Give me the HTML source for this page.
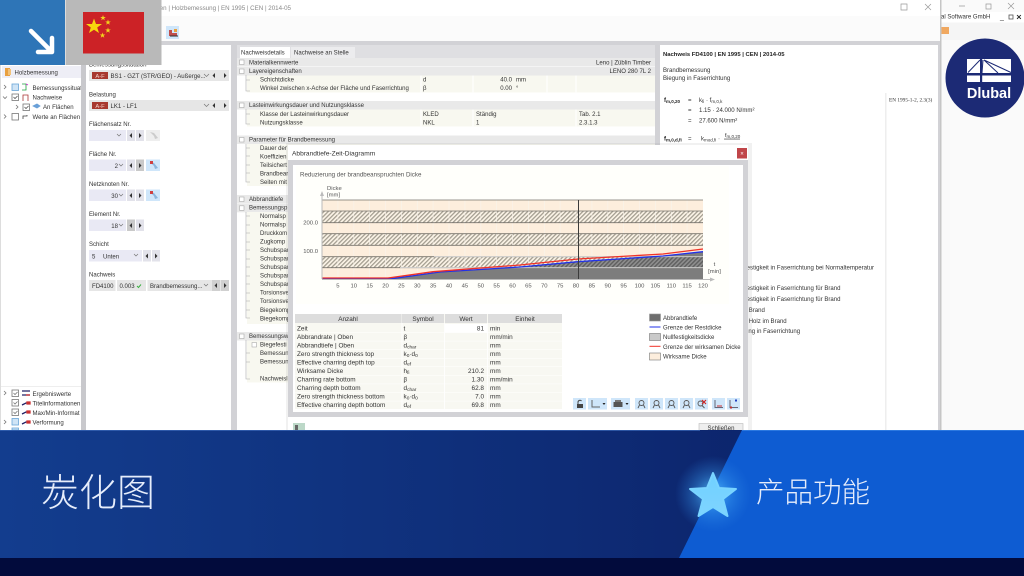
<!DOCTYPE html>
<html lang="de"><head><meta charset="utf-8"><title>炭化图</title>
<style>
html,body{margin:0;padding:0;width:1024px;height:576px;overflow:hidden;background:#fff}
svg{display:block}
text{font-family:"Liberation Sans","Noto Sans CJK SC",sans-serif;font-size:6.05px;fill:#333}
.tb text{font-size:6.4px}
.g{fill:#666}.b{font-weight:bold;fill:#222}.e{text-anchor:end}.m{text-anchor:middle}
.t{font-size:5.9px;fill:#555}
.cn{font-family:"Noto Sans CJK SC","WenQuanYi Zen Hei",sans-serif;fill:#e6edfb;font-weight:300}
.sec{fill:#e9e9e9}.row{fill:#f8f8f0}.c{fill:#e9e9f4}.a{fill:#e2e2ea}.p{fill:#cfe6fa}
.ln{stroke:#aaa;stroke-width:.6;fill:none}
</style></head><body>
<svg width="1024" height="576" viewBox="0 0 1024 576" xmlns="http://www.w3.org/2000/svg">
<defs>
<pattern id="h" width="3" height="3" patternUnits="userSpaceOnUse" patternTransform="rotate(-45)"><rect width="3" height="3" fill="#fdf5e8"/><rect width="3" height="1.3" fill="#a39d90"/></pattern>
<pattern id="hd" width="3" height="3" patternUnits="userSpaceOnUse" patternTransform="rotate(-45)"><rect width="3" height="3" fill="#8e8e8e"/><rect width="3" height="1.4" fill="#5f5f5f"/></pattern>
<clipPath id="ch"><polygon points="322,279 390,278 440,272 520,267 578,261.7 663,256 703,251.7 703,279"/></clipPath>
<linearGradient id="bg" x1="0" y1="0" x2="1" y2="0"><stop offset="0" stop-color="#133d8e"/><stop offset=".55" stop-color="#0e2c76"/><stop offset="1" stop-color="#0a1b60"/></linearGradient>
<radialGradient id="glow"><stop offset="0" stop-color="#58c4ff" stop-opacity=".9"/><stop offset=".5" stop-color="#3a9cf0" stop-opacity=".4"/><stop offset="1" stop-color="#2a80e0" stop-opacity="0"/></radialGradient>
<linearGradient id="st" x1="0" y1="0" x2="0" y2="1"><stop offset="0" stop-color="#6fd0ff"/><stop offset="1" stop-color="#7fd4ff"/></linearGradient>
<filter id="bl" x="-2%" y="-2%" width="104%" height="104%"><feGaussianBlur stdDeviation=".32"/></filter>
</defs>
<g filter="url(#bl)">
<rect width="1024" height="576" fill="#fff"/>
<!-- back window -->
<rect x="941" y="0" width="83" height="430" fill="#fafafa"/>
<rect x="941" y="12" width="83" height="10" fill="#fff"/>
<rect x="941" y="23" width="83" height="17" fill="#f5f5f5"/>
<rect x="941" y="27" width="8" height="7" fill="#f0a860"/>
<text x="941" y="18.500">al Software GmbH</text>
<text x="1000" y="19" style="font-size:7px">_</text><rect x="1009" y="15" width="4" height="4" fill="none" stroke="#555" stroke-width=".8"/><text x="1016" y="19.500" class="b" style="font-size:7px">✕</text>
<path d="M959 6h6M986 4h5v5h-5zM1008 3l6 6m0-6l-6 6" stroke="#999" stroke-width=".7" fill="none"/>
<!-- front window -->
<rect x="0" y="0" width="941" height="430" fill="#fff"/>
<rect x="940" y="0" width="1.500" height="430" fill="#c6c6c6"/>
<text x="291" y="10" class="e" style="font-size:6.200px;fill:#888">Nachweisen | Holzbemessung | EN 1995 | CEN | 2014-05</text>
<path d="M901 4h6v6h-6zM925 4l6 6m0-6l-6 6" stroke="#999" stroke-width=".7" fill="none"/>
<rect x="0" y="16" width="940" height="25" fill="#fbfbfb"/>
<rect x="166" y="26" width="13" height="13" fill="#cfe6fa"/><path d="M169 30v6h8v-3h-5v-3z" fill="#c0504d"/><path d="M170 36h8" stroke="#333"/><rect x="174" y="29" width="3" height="3" fill="#e8a040"/>
<rect x="81" y="41" width="859" height="389" fill="#d2d2d6"/>
<!-- tree -->
<rect x="0" y="65" width="81" height="365" fill="#fff"/>
<rect x="0" y="65" width="1" height="365" fill="#ddd"/>
<rect x="2" y="66" width="79" height="12" fill="#eeeef6"/>
<rect x="5" y="68" width="5" height="8" fill="#e8a040"/><rect x="8" y="69" width="3" height="6" fill="#f2c27a"/>
<text x="14.500" y="74.500">Holzbemessung</text>
<g fill="none" stroke-width=".8">
<path d="M4 85l2 2-2 2M3 96.500l2 2 2-2M16 105l2 2-2 2M4 114.500l2 2-2 2" stroke="#777"/>
<rect x="12" y="84" width="6.500" height="6.500" stroke="#6aa6d8" fill="#cfe4f6"/>
<rect x="12" y="94" width="6.500" height="6.500" stroke="#777"/><path d="M13.500 97l1.500 1.500 2.500-2.500" stroke="#555"/>
<rect x="23" y="104" width="6.500" height="6.500" stroke="#777"/><path d="M24.500 107l1.500 1.500 2.500-2.500" stroke="#555"/>
<rect x="12" y="113.500" width="6.500" height="6.500" stroke="#777"/>
<path d="M22 84h4v6h-4" stroke="#20a040"/><path d="M26 84l2 1" stroke="#d020d0"/>
<path d="M23 101v-6h5v6" stroke="#a33"/>
<path d="M33 106l4-2 3 2-3 2z" fill="#6aa0d8" stroke="#6aa0d8"/>
<path d="M23 119v-3h4v-1" stroke="#444"/>
</g>
<text x="32.500" y="90">Bemessungssituat</text><text x="32.500" y="99.500">Nachweise</text><text x="43" y="109">An Flächen</text><text x="32.500" y="119">Werte an Flächen</text>
<rect x="1" y="386" width="80" height="1" fill="#eee"/>
<g fill="none" stroke-width=".8" stroke="#777">
<path d="M4 391l2 2-2 2M4 420l2 2-2 2"/>
<rect x="12" y="390" width="6.500" height="6.500"/><path d="M13.500 393l1.500 1.500 2.500-2.500"/>
<rect x="12" y="399.500" width="6.500" height="6.500"/><path d="M13.500 402.500l1.500 1.500 2.500-2.500"/>
<rect x="12" y="409" width="6.500" height="6.500"/><path d="M13.500 412l1.500 1.500 2.500-2.500"/>
<rect x="12" y="418.500" width="6.500" height="6.500" stroke="#6aa6d8" fill="#cfe4f6"/>
<rect x="12" y="428" width="6.500" height="2" stroke="#6aa6d8" fill="#cfe4f6"/>
</g>
<g stroke-width="1.300" fill="none">
<path d="M22 391h8M22 395h8" stroke="#226"/><path d="M26 395h4" stroke="#c33"/>
<path d="M22 405l4-2h4" stroke="#226"/><path d="M27 402h3v2h-3z" fill="#c33" stroke="#c33"/>
<path d="M22 414l4-2h4" stroke="#226"/><path d="M27 411h3v2h-3z" fill="#c33" stroke="#c33"/>
<path d="M22 424l4-2h4" stroke="#226"/><path d="M27 421h3v2h-3z" fill="#c33" stroke="#c33"/>
</g>
<text x="32.500" y="396">Ergebniswerte</text><text x="32.500" y="405.500">Titelinformationen</text><text x="32.500" y="415">Max/Min-Informat</text><text x="32.500" y="424.500">Verformung</text>
<rect x="81" y="65" width="5" height="365" fill="#c8c8cc"/>
<!-- settings -->
<rect x="86" y="45" width="145" height="385" fill="#fff"/>
<text x="89" y="66.500">Bemessungssituation</text>
<rect x="89" y="70" width="140" height="11" fill="#e6e6e6"/><rect x="92" y="72" width="16" height="7" fill="#a8392f"/><text x="100" y="77.800" class="m" style="fill:#f4d0c8;font-size:5.800px">A-F</text>
<text x="110.500" y="78">BS1 - GZT (STR/GEO) - Außerge...</text>
<rect x="89" y="100" width="140" height="11" fill="#e6e6e6"/><rect x="92" y="102" width="16" height="7" fill="#a8392f"/><text x="100" y="107.800" class="m" style="fill:#f4d0c8;font-size:5.800px">A-F</text>
<text x="110.500" y="108">LK1 - LF1</text>
<text x="89" y="96.500">Belastung</text>
<text x="89" y="126">Flächensatz Nr.</text>
<rect x="89" y="130" width="37" height="11" class="c"/><rect x="127" y="130" width="8" height="11" class="a"/><rect x="136" y="130" width="8" height="11" class="a"/><rect x="146" y="130" width="14" height="11" fill="#eee"/>
<text x="89" y="156">Fläche Nr.</text>
<rect x="89" y="159.500" width="37" height="11.500" class="c"/><rect x="127" y="159.500" width="8" height="11.500" class="a"/><rect x="136" y="159.500" width="8" height="11.500" fill="#c9c9c9"/><rect x="146" y="159.500" width="14" height="11.500" class="p"/>
<text x="118" y="168" class="e">2</text>
<text x="89" y="186">Netzknoten Nr.</text>
<rect x="89" y="189.500" width="37" height="11.500" class="c"/><rect x="127" y="189.500" width="8" height="11.500" class="a"/><rect x="136" y="189.500" width="8" height="11.500" class="a"/><rect x="146" y="189.500" width="14" height="11.500" class="p"/>
<text x="118" y="198" class="e">30</text>
<text x="89" y="216">Element Nr.</text>
<rect x="89" y="219.500" width="37" height="11.500" class="c"/><rect x="127" y="219.500" width="8" height="11.500" fill="#c9c9c9"/><rect x="136" y="219.500" width="8" height="11.500" class="a"/>
<text x="118" y="228" class="e">18</text>
<text x="89" y="246">Schicht</text>
<rect x="89" y="250" width="53" height="11.500" class="c"/><rect x="143" y="250" width="8" height="11.500" class="a"/><rect x="152" y="250" width="8" height="11.500" class="a"/>
<text x="92" y="258.500">5</text><text x="103" y="258.500">Unten</text>
<text x="89" y="276.500">Nachweis</text>
<rect x="89" y="280" width="140" height="11" fill="#e6e6e6"/><rect x="115.500" y="280" width="1.500" height="11" fill="#fff"/><rect x="146" y="280" width="1.500" height="11" fill="#fff"/>
<rect x="212" y="280" width="8" height="11" fill="#d0d0d0"/><rect x="221" y="280" width="8" height="11" fill="#d0d0d0"/>
<text x="92" y="288">FD4100</text><text x="119.500" y="288">0.003</text><path d="M137 286l1.500 1.500 2.500-3" stroke="#3cb043" fill="none"/><text x="150" y="288">Brandbemessung...</text>
<!-- small arrows and carets -->
<g fill="#333">
<path d="M215 73l-2.500 2.500 2.500 2.500zM224 73l2.500 2.500-2.500 2.500zM215 103l-2.500 2.500 2.500 2.500zM224 103l2.500 2.500-2.500 2.500z"/>
<path d="M132 133l-2.500 2.500 2.500 2.500zM139 133l2.500 2.500-2.500 2.500zM132 163l-2.500 2.500 2.500 2.500zM139 163l2.500 2.500-2.500 2.500zM132 193l-2.500 2.500 2.500 2.500zM139 193l2.500 2.500-2.500 2.500zM132 223l-2.500 2.500 2.500 2.500zM139 223l2.500 2.500-2.500 2.500z"/>
<path d="M148 253.500l-2.500 2.500 2.500 2.500zM155 253.500l2.500 2.500-2.500 2.500zM217 283l-2.500 2.500 2.500 2.500zM224 283l2.500 2.500-2.500 2.500z"/>
</g>
<path d="M204 74l2.500 2.500 2.500-2.500M204 104l2.500 2.500 2.500-2.500M117 134l2 2 2-2M119 164l2 2 2-2M119 194l2 2 2-2M119 224l2 2 2-2M134 254l2 2 2-2M204 284l2 2 2-2" fill="none" stroke="#777" stroke-width=".7"/>
<g><path d="M150 162l4 4 1 3 3-1-4-5z" fill="#8cb6dc"/><rect x="150" y="161" width="3" height="3" fill="#d04040"/>
<path d="M150 192l4 4 1 3 3-1-4-5z" fill="#8cb6dc"/><rect x="150" y="191" width="3" height="3" fill="#d04040"/>
<path d="M150 132l4 4 1 3 3-1-4-5z" fill="#ccc"/></g>
<!-- main panel -->
<rect x="237" y="45" width="418" height="385" fill="#fff"/>
<rect x="237" y="45" width="418" height="13" fill="#dfdfe2"/>
<rect x="240" y="47" width="50" height="11" fill="#fff"/><rect x="291" y="47" width="64" height="11" fill="#ececee"/>
<text x="241" y="54.500">Nachweisdetails</text><text x="294" y="54.500">Nachweise an Stelle</text>
<g class="sec">
<rect x="237" y="58" width="418" height="8.500"/><rect x="237" y="67" width="418" height="8.500"/>
<rect x="237" y="101" width="418" height="8.500"/><rect x="237" y="135.500" width="418" height="8.500"/>
<rect x="237" y="195" width="418" height="8.500"/><rect x="237" y="203.800" width="418" height="8.500"/><rect x="237" y="332" width="418" height="8.500"/>
</g>
<rect x="247" y="75.500" width="408" height="17" class="row"/><rect x="247" y="109.500" width="408" height="17" class="row"/><rect x="247" y="144" width="408" height="42" class="row"/><rect x="247" y="212" width="60" height="112" class="row"/><rect x="247" y="340.500" width="60" height="42" class="row"/>
<path d="M421 75.500v17M473 75.500v17M547 75.500v17M576 75.500v17M421 109.500v17M473 109.500v17M576 109.500v17" stroke="#fff"/>
<g class="ln"><path d="M246 75v16h4M246 80h4M246 109v15h4M246 114h4M246 144v38h4M246 148h4M246 156h4M246 165h4M246 173h4M246 212v106h4M246 216h4M246 225h4M246 233h4M246 242h4M246 250h4M246 259h4M246 267h4M246 276h4M246 284h4M246 293h4M246 301h4M246 310h4M246 340v39h4M246 353h4M246 362h4"/></g>
<g fill="#fff" stroke="#aaa" stroke-width=".6"><rect x="239.500" y="60" width="4.500" height="4.500"/><rect x="239.500" y="69" width="4.500" height="4.500"/><rect x="239.500" y="103" width="4.500" height="4.500"/><rect x="239.500" y="137.500" width="4.500" height="4.500"/><rect x="239.500" y="197" width="4.500" height="4.500"/><rect x="239.500" y="205.800" width="4.500" height="4.500"/><rect x="239.500" y="334" width="4.500" height="4.500"/><rect x="252" y="342.500" width="4.500" height="4.500"/></g>
<text x="249" y="64.500">Materialkennwerte</text><text x="651" y="64.500" class="e">Leno | Züblin Timber</text>
<text x="249" y="73">Layereigenschaften</text><text x="651" y="73" class="e">LENO 280 7L 2</text>
<text x="260" y="81.500">Schichtdicke</text><text x="423" y="81.500">d</text><text x="512" y="81.500" class="e">40.0</text><text x="516" y="81.500">mm</text>
<text x="260" y="90">Winkel zwischen x-Achse der Fläche und Faserrichtung</text><text x="423" y="90">β</text><text x="512" y="90" class="e">0.00</text><text x="516" y="90">°</text>
<text x="249" y="107">Lasteinwirkungsdauer und Nutzungsklasse</text>
<text x="260" y="116">Klasse der Lasteinwirkungsdauer</text><text x="423" y="116">KLED</text><text x="476" y="116">Ständig</text><text x="579" y="116">Tab. 2.1</text>
<text x="260" y="124.500">Nutzungsklasse</text><text x="423" y="124.500">NKL</text><text x="476" y="124.500">1</text><text x="579" y="124.500">2.3.1.3</text>
<text x="249" y="141.500">Parameter für Brandbemessung</text>
<text x="260" y="150">Dauer der</text><text x="260" y="158.500">Koeffizien</text><text x="260" y="167">Teilsichert</text><text x="260" y="175.500">Brandbear</text><text x="260" y="184">Seiten mit</text>
<text x="249" y="201">Abbrandtiefe</text><text x="249" y="209.500">Bemessungsp</text>
<text x="260" y="218">Normalsp</text><text x="260" y="226.500">Normalsp</text><text x="260" y="235">Druckkom</text><text x="260" y="243.500">Zugkomp</text><text x="260" y="252">Schubspar</text><text x="260" y="260.500">Schubspar</text><text x="260" y="269">Schubspar</text><text x="260" y="277.500">Schubspar</text><text x="260" y="286">Schubspar</text><text x="260" y="294.500">Torsionsve</text><text x="260" y="303">Torsionsve</text><text x="260" y="312">Biegekomp</text><text x="260" y="320.500">Biegekomp</text>
<text x="249" y="338">Bemessungsw</text><text x="260" y="346.500">Biegefesti</text><text x="260" y="355">Bemessun</text><text x="260" y="363.500">Bemessun</text><text x="260" y="380.500">Nachweisl</text>
<!-- right panel -->
<rect x="660" y="45" width="278" height="385" fill="#fff"/>
<rect x="885" y="93" width="1.500" height="337" fill="#eee"/>
<text x="663" y="56" class="b" style="font-size:5.900px">Nachweis FD4100 | EN 1995 | CEN | 2014-05</text>
<text x="663" y="72">Brandbemessung</text><text x="663" y="80">Biegung in Faserrichtung</text>
<text x="664" y="102" class="b">f<tspan dy="1" style="font-size:4.500px">m,0,20</tspan></text>
<text x="688" y="102">=</text><text x="699" y="102">k<tspan dy="1" style="font-size:4.500px">fi</tspan><tspan dy="-1"> · f</tspan><tspan dy="1" style="font-size:4.500px">m,0,k</tspan></text>
<text x="688" y="112">=</text><text x="699" y="112">1.15 · 24.000 N/mm²</text>
<text x="688" y="122.500">=</text><text x="699" y="122.500">27.600 N/mm²</text>
<text x="664" y="140.500" class="b">f<tspan dy="1" style="font-size:4.500px">m,0,d,fi</tspan></text><text x="688" y="140.500">=</text><text x="701" y="140.500">k<tspan dy="1" style="font-size:4.500px">mod,fi</tspan><tspan dy="-1"> ·</tspan></text><text x="725" y="137" style="font-size:5.500px">f<tspan dy="1" style="font-size:4.500px">m,0,20</tspan></text><rect x="724" y="138.700" width="16" height=".7" fill="#444"/>
<text x="889" y="101.500" style="font-family:'Liberation Serif',serif;font-size:5.300px">EN 1995-1-2, 2.3(3)</text>
<text x="745" y="269.500">festigkeit in Faserrichtung bei Normaltemperatur</text>
<text x="745" y="290">festigkeit in Faserrichtung für Brand</text><text x="745" y="301">festigkeit in Faserrichtung für Brand</text><text x="745" y="312">r Brand</text><text x="745" y="323">r Holz im Brand</text><text x="745" y="333">ung in Faserrichtung</text>
<!-- dialog -->
<rect x="286" y="143" width="466" height="287" fill="#888" opacity=".12"/>
<rect x="288" y="145" width="460" height="285" fill="#fff"/>
<text x="292" y="155.500" style="font-size:6.600px">Abbrandtiefe-Zeit-Diagramm</text>
<rect x="737" y="148" width="10" height="10.500" fill="#c0444a"/><text x="742" y="155.500" class="m" style="fill:#fff;font-size:6px">×</text>
<rect x="288" y="160" width="460" height="257" fill="#d2d2d6"/>
<rect x="293" y="165" width="450" height="247" fill="#fff"/>
<rect x="296" y="166" width="433" height="138" fill="#fffffb"/>
<text x="300" y="176.500" style="fill:#555;font-size:6.200px">Reduzierung der brandbeanspruchten Dicke</text>
<!-- chart -->
<rect x="322" y="200" width="381" height="79" fill="#fdeedd"/>
<rect x="322" y="211" width="381" height="11.700" fill="url(#h)"/><rect x="322" y="233.700" width="381" height="11.600" fill="url(#h)"/><rect x="322" y="256.700" width="381" height="11" fill="url(#h)"/>
<path d="M337.900 200v79M353.800 200v79M369.600 200v79M385.500 200v79M401.400 200v79M417.300 200v79M433.100 200v79M449 200v79M464.900 200v79M480.800 200v79M496.600 200v79M512.500 200v79M528.400 200v79M544.300 200v79M560.100 200v79M576 200v79M591.900 200v79M607.800 200v79M623.600 200v79M639.500 200v79M655.400 200v79M671.300 200v79M687.100 200v79" stroke="#f9f3ea" stroke-width=".7"/>
<g clip-path="url(#ch)"><rect x="322" y="200" width="381" height="79" fill="#7d7d7d"/><rect x="322" y="256.700" width="381" height="11" fill="url(#hd)"/></g>
<path d="M322 200h381M322 211h381M322 222.700h381M322 233.700h381M322 245.300h381M322 256.700h381M322 267.700h381" stroke="#77736c" stroke-width=".8" fill="none"/>
<path d="M434 256.700h269M400 267.700h303" stroke="#d8d8d8" stroke-width=".8" fill="none"/>
<path d="M322 279h68l50-7 80-5 58-5.300 85-5.700 40-4.300" fill="none" stroke="#2030e8" stroke-width="1.300"/>
<path d="M322 278h66l45-6.300 87-6.700 58-6 85-5 40-5" fill="none" stroke="#f03028" stroke-width="1.300"/>
<path d="M578.500 200v79.500" stroke="#3a3a3a" stroke-width="1"/>
<path d="M322 279V194" stroke="#bbb"/><path d="M320 196l2-5 2 5z" fill="#bbb"/><path d="M322 279.500h392" stroke="#bbb"/><path d="M710 277.500l5 2-5 2z" fill="#bbb"/>
<text x="337.900" y="287.500" class="t m">5</text><text x="353.800" y="287.500" class="t m">10</text><text x="369.600" y="287.500" class="t m">15</text><text x="385.500" y="287.500" class="t m">20</text><text x="401.400" y="287.500" class="t m">25</text><text x="417.300" y="287.500" class="t m">30</text><text x="433.100" y="287.500" class="t m">35</text><text x="449" y="287.500" class="t m">40</text><text x="464.900" y="287.500" class="t m">45</text><text x="480.800" y="287.500" class="t m">50</text><text x="496.600" y="287.500" class="t m">55</text><text x="512.500" y="287.500" class="t m">60</text><text x="528.400" y="287.500" class="t m">65</text><text x="544.300" y="287.500" class="t m">70</text><text x="560.100" y="287.500" class="t m">75</text><text x="576" y="287.500" class="t m">80</text><text x="591.900" y="287.500" class="t m">85</text><text x="607.800" y="287.500" class="t m">90</text><text x="623.600" y="287.500" class="t m">95</text><text x="639.500" y="287.500" class="t m">100</text><text x="655.400" y="287.500" class="t m">105</text><text x="671.300" y="287.500" class="t m">110</text><text x="687.100" y="287.500" class="t m">115</text><text x="703" y="287.500" class="t m">120</text>
<text x="318" y="224.700" class="t e">200.0</text><text x="318" y="253" class="t e">100.0</text>
<text x="327" y="190" class="t">Dicke</text><text x="327" y="196.500" class="t">[mm]</text>
<text x="714.500" y="266" class="t m">t</text><text x="714.500" y="273" class="t m">[min]</text>
<!-- table -->
<rect x="295" y="314" width="267" height="95" fill="#f8f8f2"/>
<rect x="295" y="314" width="106.500" height="9" fill="#ddd"/><rect x="402" y="314" width="42" height="9" fill="#ddd"/><rect x="445" y="314" width="42" height="9" fill="#ddd"/><rect x="488" y="314" width="74" height="9" fill="#ddd"/>
<rect x="445" y="324" width="42" height="8.500" fill="#fff"/>
<path d="M402 323v86M444.500 323v86M487.500 323v86" stroke="#fff" stroke-width=".8"/>
<path d="M295 332.600h267M295 341.100h267M295 349.700h267M295 358.300h267M295 366.800h267M295 375.400h267M295 383.900h267M295 392.500h267M295 401.100h267" stroke="#fff" stroke-width=".5"/>
<g class="tb">
<text x="348" y="320.800" class="m">Anzahl</text><text x="423" y="320.800" class="m">Symbol</text><text x="466" y="320.800" class="m">Wert</text><text x="525" y="320.800" class="m">Einheit</text>
<text x="297" y="330.500">Zeit</text><text x="403.500" y="330.500">t</text><text x="484" y="330.500" class="e">81</text><text x="490" y="330.500">min</text>
<text x="297" y="339">Abbrandrate | Oben</text><text x="403.500" y="339">β</text><text x="490" y="339">mm/min</text>
<text x="297" y="347.500">Abbrandtiefe | Oben</text><text x="403.500" y="347.500">d<tspan dy="1" style="font-size:4.800px">char</tspan></text><text x="490" y="347.500">mm</text>
<text x="297" y="356">Zero strength thickness top</text><text x="403.500" y="356">k<tspan dy="1" style="font-size:4.800px">0</tspan><tspan dy="-1">·d</tspan><tspan dy="1" style="font-size:4.800px">0</tspan></text><text x="490" y="356">mm</text>
<text x="297" y="364.500">Effective charring depth top</text><text x="403.500" y="364.500">d<tspan dy="1" style="font-size:4.800px">ef</tspan></text><text x="490" y="364.500">mm</text>
<text x="297" y="373">Wirksame Dicke</text><text x="403.500" y="373">h<tspan dy="1" style="font-size:4.800px">fi</tspan></text><text x="484" y="373" class="e">210.2</text><text x="490" y="373">mm</text>
<text x="297" y="381.500">Charring rate bottom</text><text x="403.500" y="381.500">β</text><text x="484" y="381.500" class="e">1.30</text><text x="490" y="381.500">mm/min</text>
<text x="297" y="390">Charring depth bottom</text><text x="403.500" y="390">d<tspan dy="1" style="font-size:4.800px">char</tspan></text><text x="484" y="390" class="e">62.8</text><text x="490" y="390">mm</text>
<text x="297" y="398.500">Zero strength thickness bottom</text><text x="403.500" y="398.500">k<tspan dy="1" style="font-size:4.800px">0</tspan><tspan dy="-1">·d</tspan><tspan dy="1" style="font-size:4.800px">0</tspan></text><text x="484" y="398.500" class="e">7.0</text><text x="490" y="398.500">mm</text>
<text x="297" y="407">Effective charring depth bottom</text><text x="403.500" y="407">d<tspan dy="1" style="font-size:4.800px">ef</tspan></text><text x="484" y="407" class="e">69.8</text><text x="490" y="407">mm</text>
</g>
<!-- legend -->
<rect x="649.500" y="314" width="11" height="7" fill="#6e6e6e" stroke="#999" stroke-width=".6"/><text x="663" y="320">Abbrandtiefe</text>
<path d="M649.500 327h11" stroke="#2030e8" stroke-width="1"/><text x="663" y="329.500">Grenze der Restdicke</text>
<rect x="649.500" y="333.500" width="11" height="7" fill="#c9c9c9" stroke="#777" stroke-width=".6"/><text x="663" y="339">Nullfestigkeitsdicke</text>
<path d="M649.500 346.300h11" stroke="#f03028" stroke-width="1"/><text x="663" y="349">Grenze der wirksamen Dicke</text>
<rect x="649.500" y="353" width="11" height="7" fill="#fdeedd" stroke="#777" stroke-width=".6"/><text x="663" y="358.500">Wirksame Dicke</text>
<!-- dialog toolbar -->
<g class="p"><rect x="573" y="398" width="13" height="11.500"/><rect x="588" y="398" width="19" height="11.500"/><rect x="611" y="398" width="19" height="11.500"/><rect x="635" y="398" width="13" height="11.500"/><rect x="650" y="398" width="13" height="11.500"/><rect x="665" y="398" width="13" height="11.500"/><rect x="680" y="398" width="13" height="11.500"/><rect x="695" y="398" width="13" height="11.500"/><rect x="712" y="398" width="13" height="11.500"/><rect x="727" y="398" width="13" height="11.500"/></g>
<path d="M577 404h6v4h-6z" fill="#444"/><path d="M578 404v-2a2 2 0 0 1 3.500-1" fill="none" stroke="#444"/>
<path d="M592 400v7h8" fill="none" stroke="#666"/><path d="M602.500 403l3 0-1.500 2z" fill="#222"/>
<rect x="613.500" y="402" width="9" height="5" fill="#555"/><rect x="615" y="400" width="6" height="2" fill="#777"/><path d="M625.500 403l3 0-1.500 2z" fill="#222"/>
<g fill="none" stroke="#555" stroke-width=".9"><circle cx="641.500" cy="403" r="2.500"/><path d="M638 408l1.500-3M645 408l-1.500-3"/><circle cx="656.500" cy="403" r="2.500"/><path d="M653 408l1.500-3M660 408l-1.500-3"/><circle cx="671.500" cy="403" r="2.500"/><path d="M668 408l1.500-3M675 408l-1.500-3"/><circle cx="686.500" cy="403" r="2.500"/><path d="M683 408l1.500-3M690 408l-1.500-3"/><circle cx="700.500" cy="403.500" r="2.500"/><path d="M702 405.500l2.500 2.500"/></g>
<path d="M702 400l4 4m0-4l-4 4" stroke="#d02020" stroke-width="1.100"/>
<path d="M715 400v7.500h8" fill="none" stroke="#667"/><path d="M717 406h5" stroke="#c33"/><path d="M730 400v7.500h8" fill="none" stroke="#667"/><rect x="735" y="399.500" width="2" height="2" fill="#2040c0"/><rect x="730" y="406.500" width="2" height="2" fill="#c03030"/>
<!-- footer -->
<rect x="293" y="423" width="12" height="7" fill="#bcd8c8"/><rect x="295" y="425" width="3" height="5" fill="#666"/>
<rect x="699" y="423.500" width="44" height="8" fill="#eee" stroke="#bbb" stroke-width=".6"/><text x="721" y="430" class="m">Schließen</text>
<!-- overlay squares -->
<rect x="0" y="0" width="65" height="65" fill="#2e74b7"/>
<path d="M31 31 L51 51 M52 38 V52 H38" fill="none" stroke="#fff" stroke-width="4.500" stroke-linejoin="round" stroke-linecap="round"/>
<rect x="65.500" y="0" width="96" height="65" fill="#b9b9b9"/>
<rect x="83" y="12" width="61" height="41.500" fill="#cc2028"/>
<polygon points="94,18.500 96,24 102,24 97.200,27.500 99,33 94,29.700 89,33 90.800,27.500 86,24 92,24" fill="#f7d80f"/>
<g fill="#f2d41a">
<polygon points="103,15 103.700,17 105.800,17 104.100,18.200 104.800,20.200 103,19 101.200,20.200 101.900,18.200 100.200,17 102.300,17"/>
<polygon points="108,19.500 108.700,21.500 110.800,21.500 109.100,22.700 109.800,24.700 108,23.500 106.200,24.700 106.900,22.700 105.200,21.500 107.300,21.500"/>
<polygon points="108,27.500 108.700,29.500 110.800,29.500 109.100,30.700 109.800,32.700 108,31.500 106.200,32.700 106.900,30.700 105.200,29.500 107.300,29.500"/>
<polygon points="102.500,32.500 103.200,34.500 105.300,34.500 103.600,35.700 104.300,37.700 102.500,36.500 100.700,37.700 101.400,35.700 99.700,34.500 101.800,34.500"/>
</g>
<!-- Dlubal logo -->
<circle cx="985" cy="78" r="39.500" fill="#1d2a75"/>
<rect x="967" y="59" width="44" height="14" fill="#fff"/><rect x="967" y="75.500" width="44" height="6.500" fill="#fff"/>
<path d="M968 72.500l12-12.500M983 60l-1 13M984 60l27 12.500M984 60l14 13" stroke="#1d2a75" stroke-width="1" fill="none"/><rect x="980" y="59" width="2.200" height="23" fill="#1d2a75"/>
<text x="989" y="98" class="m" style="font-size:14.500px;font-weight:bold;fill:#fff">Dlubal</text>
</g>
<!-- banner -->
<rect x="0" y="430" width="1024" height="128" fill="url(#bg)"/>
<rect x="0" y="430" width="700" height="1" fill="#3a68b8" opacity=".7"/>
<polygon points="742,430 1024,430 1024,558 679,558" fill="#0e5cd2"/>
<rect x="742" y="430" width="282" height="1" fill="#2b78e0"/>
<rect x="0" y="558" width="1024" height="18" fill="#020b3c"/>
<circle cx="713" cy="494" r="38" fill="url(#glow)"/>
<polygon points="713,473 719,488 736,489 723,499 727.500,516 713,507 698.500,516 703,499 690,489 707,488" fill="url(#st)" stroke="#7ad4ff" stroke-width="2" stroke-linejoin="round"/>
<text x="41" y="506" class="cn" style="font-size:38px">炭化图</text>
<text x="756" y="502" class="cn" style="font-size:28.500px">产品功能</text>
</svg>
</body></html>
